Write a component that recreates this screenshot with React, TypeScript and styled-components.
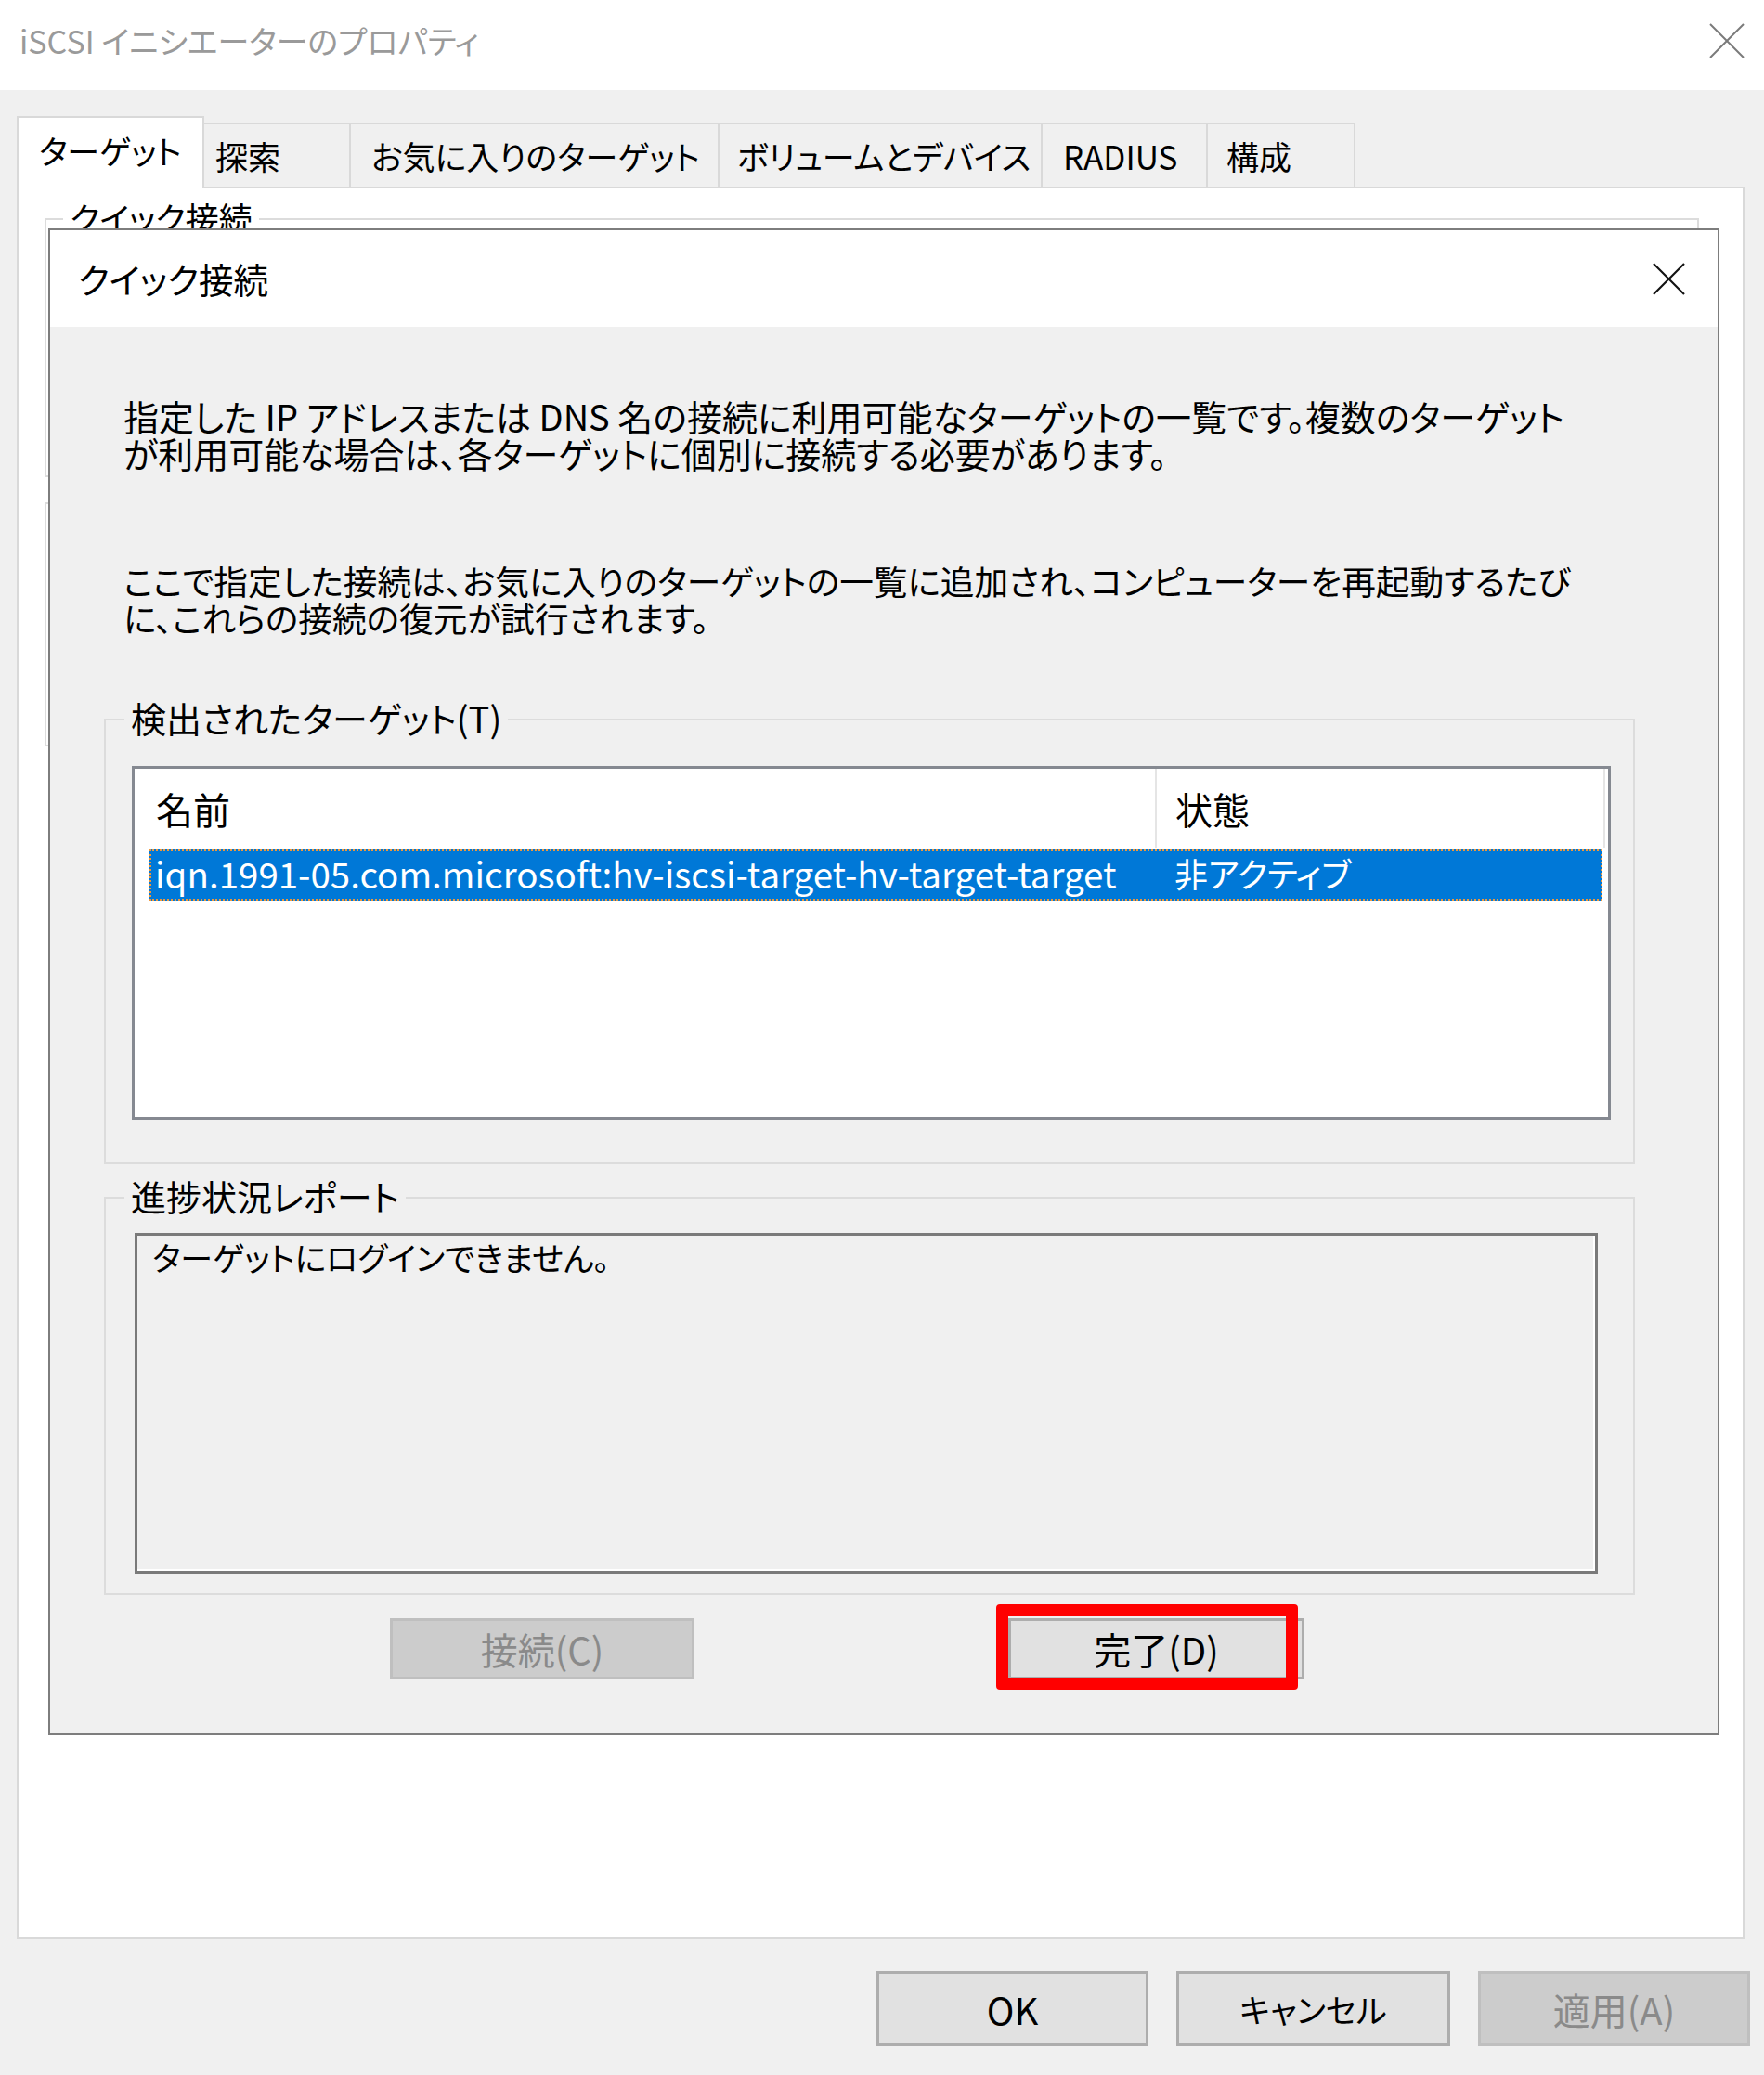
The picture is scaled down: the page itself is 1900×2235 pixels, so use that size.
import React from 'react';
import styled, { createGlobalStyle } from 'styled-components';

const FONT = `"Noto Sans CJK JP", "Noto Sans", sans-serif`;

const Global = createGlobalStyle`
  html, body { margin: 0; padding: 0; }
  body {
    background: #f0f0f0;
    font-family: ${FONT};
    color: #000;
    font-feature-settings: "palt" 1;
  }
  #root { width: 1900px; height: 2235px; }
`;

const Window = styled.div`
  width: 1900px;
  height: 2235px;
  display: flex;
  flex-direction: column;
  background: #f0f0f0;
  overflow: hidden;
`;

const TitleBar = styled.div`
  height: 97px;
  flex: none;
  background: #fff;
  display: flex;
  align-items: center;
  justify-content: space-between;
  padding: 0 21px 10px;
  box-sizing: border-box;
`;

const TitleText = styled.div`
  font-size: 34px;
  line-height: 40px;
  color: #9a9a9a;
  white-space: nowrap;
`;

const CloseIcon = styled.svg<{ $size: number }>`
  width: ${p => p.$size}px;
  height: ${p => p.$size}px;
  flex: none;
  display: block;
`;

const Body = styled.div`
  flex: 1;
  display: flex;
  flex-direction: column;
  padding: 28px 21px 0 18px;
`;

const TabStrip = styled.div`
  height: 76px;
  display: flex;
  align-items: flex-end;
  position: relative;
  z-index: 2;
`;

const Tab = styled.div<{ $w: number; $pl: number; $active?: boolean }>`
  box-sizing: border-box;
  width: ${p => p.$w}px;
  height: ${p => (p.$active ? 78 : 69)}px;
  margin-bottom: ${p => (p.$active ? -2 : 0)}px;
  margin-left: -2px;
  &:first-child { margin-left: 0; }
  background: ${p => (p.$active ? '#fff' : '#f0f0f0')};
  border: 2px solid #d9d9d9;
  border-bottom: none;
  display: flex;
  align-items: center;
  padding-left: ${p => p.$pl}px;
  padding-bottom: ${p => (p.$active ? 8 : 0)}px;
  font-size: 35px;
  white-space: nowrap;
  position: relative;
  z-index: ${p => (p.$active ? 2 : 1)};
`;

const TabPanel = styled.div`
  box-sizing: border-box;
  width: 1861px;
  height: 1887px;
  flex: none;
  background: #fff;
  border: 2px solid #d9d9d9;
  position: relative;
  display: flex;
  flex-direction: column;
`;

const Group = styled.fieldset<{ $mt: number; $ml: number; $mr: number; $h: number }>`
  margin: ${p => p.$mt}px ${p => p.$mr}px 0 ${p => p.$ml}px;
  padding: 0;
  border: 2px solid #dcdcdc;
  min-width: 0;
  height: ${p => p.$h}px;
  box-sizing: border-box;
  display: flex;
  flex-direction: column;
`;

const Legend = styled.legend<{ $ml: number; $fs: number }>`
  margin-left: ${p => p.$ml}px;
  padding: 0 7px 4px;
  font-size: ${p => p.$fs}px;
  line-height: 36px;
  white-space: nowrap;
`;

const Dialog = styled.div`
  position: absolute;
  left: 32px;
  top: 43px;
  width: 1800px;
  height: 1623px;
  box-sizing: border-box;
  border: 2px solid #7d7d7d;
  background: #f0f0f0;
  display: flex;
  flex-direction: column;
  z-index: 5;
`;

const DialogTitle = styled.div`
  height: 104px;
  flex: none;
  background: #fff;
  display: flex;
  align-items: center;
  justify-content: space-between;
  padding: 0 35px 0 30px;
`;

const DialogTitleText = styled.div`
  font-size: 37.5px;
  line-height: 40px;
  white-space: nowrap;
`;

const DialogBody = styled.div`
  flex: 1;
  display: flex;
  flex-direction: column;
  padding-top: 76px;
`;

const Paragraph = styled.p<{ $mt: number; $fs: number }>`
  margin: ${p => p.$mt}px 0 0 79px;
  font-size: ${p => p.$fs}px;
  line-height: 40px;
  white-space: nowrap;
`;

const ListView = styled.div`
  box-sizing: border-box;
  margin: 30px 24px 0 28px;
  height: 381px;
  background: #fff;
  border: 3px solid #858991;
  display: flex;
  flex-direction: column;
`;

const HeaderRow = styled.div`
  height: 85px;
  display: flex;
  flex: none;
  box-sizing: border-box;
`;

const HeaderCell = styled.div<{ $w: number; $pl: number }>`
  box-sizing: border-box;
  width: ${p => p.$w}px;
  padding-left: ${p => p.$pl}px;
  display: flex;
  align-items: center;
  border-right: 2px solid #e5e5e5;
  font-size: 40px;
  white-space: nowrap;
`;

const ItemRow = styled.div<{ $selected?: boolean }>`
  margin: 2px 0 0 16px;
  width: 1565px;
  height: 55px;
  box-sizing: border-box;
  display: flex;
  background: ${p => (p.$selected ? '#0078d7' : 'transparent')};
  color: ${p => (p.$selected ? '#fff' : '#000')};
  outline: ${p => (p.$selected ? '2px dotted #f0973a' : 'none')};
  outline-offset: -2px;
`;

const ItemCell = styled.div<{ $w?: number; $pl: number; $fs: number }>`
  box-sizing: border-box;
  ${p => (p.$w ? `width: ${p.$w}px;` : 'flex: 1;')}
  padding-left: ${p => p.$pl}px;
  padding-bottom: 5px;
  display: flex;
  align-items: center;
  font-size: ${p => p.$fs}px;
  white-space: nowrap;
`;

const ReportBox = styled.div`
  box-sizing: border-box;
  margin: 18px 38px 0 31px;
  height: 367px;
  border: 3px solid #7a7a7a;
  box-shadow: inset -2px -2px 0 #ffffff;
  background: #f0f0f0;
  padding: 3px 0 0 16px;
  font-size: 35px;
  line-height: 40px;
  white-space: nowrap;
`;

const DialogButtons = styled.div`
  display: flex;
  margin-top: 25px;
  padding-left: 366px;
  gap: 338px;
`;

const ButtonWrap = styled.div`
  position: relative;
`;

const Button = styled.div<{ $w: number; $h: number; $fs: number; $disabled?: boolean }>`
  box-sizing: border-box;
  width: ${p => p.$w}px;
  height: ${p => p.$h}px;
  background: ${p => (p.$disabled ? '#cccccc' : '#e1e1e1')};
  border: 3px solid ${p => (p.$disabled ? '#bfbfbf' : '#adadad')};
  color: ${p => (p.$disabled ? '#8a8a8a' : '#000')};
  display: flex;
  align-items: center;
  justify-content: center;
  font-size: ${p => p.$fs}px;
  white-space: nowrap;
`;

const Highlight = styled.div`
  position: absolute;
  left: -13px;
  top: -15px;
  right: 7px;
  bottom: -11px;
  border: 13px solid #ff0000;
  border-radius: 4px;
  pointer-events: none;
`;

const FooterButtons = styled.div`
  display: flex;
  justify-content: flex-end;
  margin: 35px -6px 0 0;
  gap: 30px;
`;

const XIcon: React.FC<{ size: number; color: string; stroke: number }> = ({ size, color, stroke }) => (
  <CloseIcon $size={size} viewBox={`0 0 ${size} ${size}`}>
    <line x1={1} y1={1} x2={size - 1} y2={size - 1} stroke={color} strokeWidth={stroke} />
    <line x1={size - 1} y1={1} x2={1} y2={size - 1} stroke={color} strokeWidth={stroke} />
  </CloseIcon>
);

const tabs = [
  { label: 'ターゲット', w: 202, pl: 22, active: true },
  { label: '探索', w: 160, pl: 12 },
  { label: 'お気に入りのターゲット', w: 399, pl: 22 },
  { label: 'ボリュームとデバイス', w: 350, pl: 19 },
  { label: 'RADIUS', w: 180, pl: 22 },
  { label: '構成', w: 161, pl: 20 },
];

export default function App() {
  return (
    <>
      <Global />
      <Window>
        <TitleBar>
          <TitleText>iSCSI イニシエーターのプロパティ</TitleText>
          <XIcon size={38} color="#7a7a7a" stroke={2} />
        </TitleBar>
        <Body>
          <TabStrip>
            {tabs.map(t => (
              <Tab key={t.label} $w={t.w} $pl={t.pl} $active={t.active}>
                {t.label}
              </Tab>
            ))}
          </TabStrip>
          <TabPanel>
            <Group $mt={13} $ml={28} $mr={47} $h={298}>
              <Legend $ml={18} $fs={36}>クイック接続</Legend>
            </Group>
            <Group $mt={27} $ml={28} $mr={47} $h={263} />

            <Dialog>
              <DialogTitle>
                <DialogTitleText>クイック接続</DialogTitleText>
                <XIcon size={35} color="#111" stroke={2.2} />
              </DialogTitle>
              <DialogBody>
                <Paragraph $mt={0} $fs={38}>
                  指定した IP アドレスまたは DNS 名の接続に利用可能なターゲットの一覧です。複数のターゲット
                  <br />
                  が利用可能な場合は、各ターゲットに個別に接続する必要があります。
                </Paragraph>
                <Paragraph $mt={97} $fs={36.7}>
                  ここで指定した接続は、お気に入りのターゲットの一覧に追加され、コンピューターを再起動するたび
                  <br />
                  に、これらの接続の復元が試行されます。
                </Paragraph>

                <Group $mt={70} $ml={58} $mr={89} $h={499}>
                  <Legend $ml={20} $fs={38}>検出されたターゲット(T)</Legend>
                  <ListView>
                    <HeaderRow>
                      <HeaderCell $w={1101} $pl={23}>名前</HeaderCell>
                      <HeaderCell $w={483} $pl={20}>状態</HeaderCell>
                    </HeaderRow>
                    <ItemRow $selected>
                      <ItemCell $w={1082} $pl={6} $fs={38.5}>iqn.1991-05.com.microsoft:hv-iscsi-target-hv-target-target</ItemCell>
                      <ItemCell $pl={22} $fs={36}>非アクティブ</ItemCell>
                    </ItemRow>
                  </ListView>
                </Group>

                <Group $mt={16} $ml={58} $mr={89} $h={448}>
                  <Legend $ml={20} $fs={38}>進捗状況レポート</Legend>
                  <ReportBox>ターゲットにログインできません。</ReportBox>
                </Group>

                <DialogButtons>
                  <Button $w={328} $h={66} $fs={40} $disabled>接続(C)</Button>
                  <ButtonWrap>
                    <Button $w={319} $h={66} $fs={40}>完了(D)</Button>
                    <Highlight />
                  </ButtonWrap>
                </DialogButtons>
              </DialogBody>
            </Dialog>
          </TabPanel>
          <FooterButtons>
            <Button $w={293} $h={81} $fs={40}>OK</Button>
            <Button $w={295} $h={81} $fs={35}>キャンセル</Button>
            <Button $w={293} $h={81} $fs={40} $disabled>適用(A)</Button>
          </FooterButtons>
        </Body>
      </Window>
    </>
  );
}
